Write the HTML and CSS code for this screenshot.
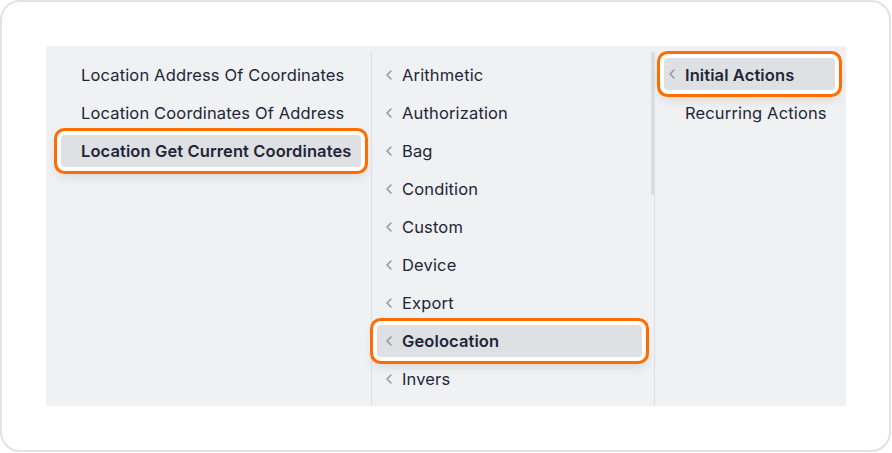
FILE: index.html
```html
<!DOCTYPE html>
<html>
<head>
<meta charset="utf-8">
<link rel="stylesheet" href="styles.css">
</head>
<body>
<div class="card">
  <div class="panel">
    <div class="col col-1">
      <div class="item">Location Address Of Coordinates</div>
      <div class="item">Location Coordinates Of Address</div>
      <div class="item active">Location Get Current Coordinates</div>
    </div>
    <div class="col col-2">
      <div class="list">
        <div class="item"><svg class="chev" viewBox="0 0 6 10"><polyline points="5,1 1,5 5,9"/></svg><span>Arithmetic</span></div>
        <div class="item"><svg class="chev" viewBox="0 0 6 10"><polyline points="5,1 1,5 5,9"/></svg><span>Authorization</span></div>
        <div class="item"><svg class="chev" viewBox="0 0 6 10"><polyline points="5,1 1,5 5,9"/></svg><span>Bag</span></div>
        <div class="item"><svg class="chev" viewBox="0 0 6 10"><polyline points="5,1 1,5 5,9"/></svg><span>Condition</span></div>
        <div class="item"><svg class="chev" viewBox="0 0 6 10"><polyline points="5,1 1,5 5,9"/></svg><span>Custom</span></div>
        <div class="item"><svg class="chev" viewBox="0 0 6 10"><polyline points="5,1 1,5 5,9"/></svg><span>Device</span></div>
        <div class="item"><svg class="chev" viewBox="0 0 6 10"><polyline points="5,1 1,5 5,9"/></svg><span>Export</span></div>
        <div class="item active"><svg class="chev" viewBox="0 0 6 10"><polyline points="5,1 1,5 5,9"/></svg><span>Geolocation</span></div>
        <div class="item"><svg class="chev" viewBox="0 0 6 10"><polyline points="5,1 1,5 5,9"/></svg><span>Invers</span></div>
      </div>
      <div class="scrollbar"></div>
    </div>
    <div class="col col-3">
      <div class="item active"><svg class="chev" viewBox="0 0 6 10"><polyline points="5,1 1,5 5,9"/></svg><span>Initial Actions</span></div>
      <div class="item"><svg class="chev hidden" viewBox="0 0 6 10"><polyline points="5,1 1,5 5,9"/></svg><span>Recurring Actions</span></div>
    </div>
  </div>
</div>
</body>
</html>
```

FILE: styles.css
```css
* { box-sizing: border-box; }
html, body {
  margin: 0;
  padding: 0;
  background: #ffffff;
}
body {
  font-family: Inter, "Noto Sans", sans-serif;
  color: #1e2638;
}
.card {
  width: 891px;
  height: 452px;
  border: 2px solid #e0e2e6;
  border-radius: 20px;
  padding: 44px;
  background: #fff;
}
.panel {
  width: 800px;
  height: 360px;
  background: #f0f1f3;
  display: flex;
  overflow: hidden;
}
.col {
  padding-top: 13px;
  position: relative;
}
.col-1 {
  width: 326px;
  padding-left: 15px;
  padding-right: 11px;
}
.col-1::after,
.col-2::after {
  content: "";
  position: absolute;
  right: 0;
  top: 6px;
  bottom: 0;
  width: 1px;
  background: #dcdee2;
}
.col-2 {
  width: 283px;
  padding-left: 5px;
  padding-right: 13px;
}
.col-3 {
  width: 191px;
  padding-left: 9px;
  padding-right: 11px;
  padding-top: 12px;
}
.item {
  height: 32px;
  margin-bottom: 6px;
  display: flex;
  align-items: center;
  font-size: 16.5px;
  font-weight: 400;
  letter-spacing: 0.15px;
  border-radius: 4px;
  white-space: nowrap;
}
.col-1 .item { padding-left: 20px; }
.col-2 .item { padding-left: 9px; }
.col-3 .item { padding-left: 5px; }
.col-3 .item span { position: relative; top: 1px; }
.chev {
  width: 6px;
  height: 10px;
  margin-right: 10px;
  flex: none;
  fill: none;
  stroke: #8e9299;
  stroke-width: 1.4;
  stroke-linecap: round;
  stroke-linejoin: round;
}
.chev.hidden { visibility: hidden; }
.item.active {
  background: #dfe0e4;
  font-weight: 600;
  letter-spacing: 0.1px;
  box-shadow: 0 0 0 4px #ffffff, 0 0 0 7px #ff6d00, 0 6px 12px 4px rgba(0, 0, 0, 0.10);
}
.scrollbar {
  position: absolute;
  right: 1px;
  top: 6px;
  width: 3px;
  height: 143px;
  background: #dcdde1;
}
```
